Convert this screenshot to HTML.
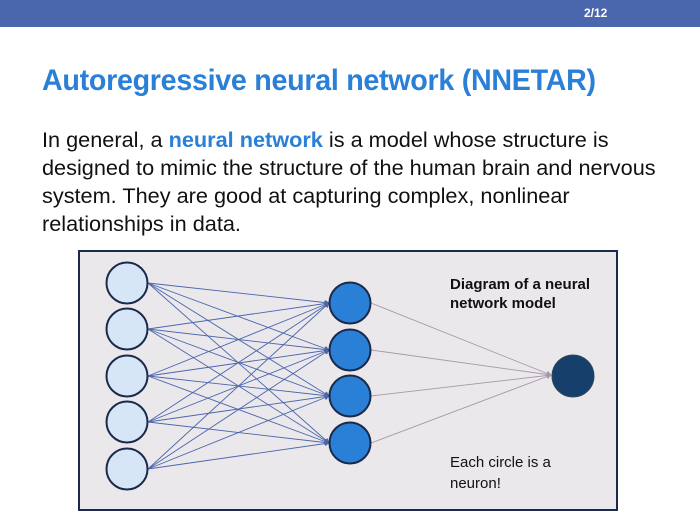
<!DOCTYPE html>
<html><head><style>
body{margin:0;width:700px;height:525px;background:#fff;position:relative;overflow:hidden;font-family:"Liberation Sans",sans-serif}
.bar{position:absolute;left:0;top:0;width:700px;height:27px;background:#4a66ad}
.pg{position:absolute;left:584px;top:6px;color:#fff;font-weight:bold;font-size:12px}
.t{position:absolute;left:42px;top:64px;font-size:30px;font-weight:bold;color:#2a7fd6;white-space:nowrap;transform-origin:0 0;transform:scaleX(0.955);letter-spacing:-0.3px}
.b{position:absolute;left:42px;top:126px;font-size:21.7px;line-height:28px;color:#111;white-space:nowrap}
.b span{color:#2a7fd6;font-weight:bold}
</style></head><body>
<div class="bar"></div><div class="pg">2/12</div>
<div class="t">Autoregressive neural network (NNETAR)</div>
<div class="b">In general, a <span>neural network</span> is a model whose structure is<br>designed to mimic the structure of the human brain and nervous<br>system. They are good at capturing complex, nonlinear<br>relationships in data.</div>
<svg style="position:absolute;left:0;top:0" width="700" height="525">
<defs><marker id="a" markerWidth="6" markerHeight="6" refX="5" refY="3" orient="auto"><path d="M0,0L6,3L0,6z" fill="#4a66ad"/></marker>
<marker id="g" markerWidth="6" markerHeight="6" refX="5" refY="3" orient="auto"><path d="M0,0L6,3L0,6z" fill="#a898a8"/></marker></defs>
<rect x="79" y="251" width="538" height="259" fill="#ebe8eb" stroke="#1b2a4a" stroke-width="2"/>
<g stroke="#4a66ad" stroke-width="0.9" marker-end="url(#a)">
<line x1="148" y1="283" x2="329" y2="303"/><line x1="148" y1="283" x2="329" y2="350"/><line x1="148" y1="283" x2="329" y2="396"/><line x1="148" y1="283" x2="329" y2="443"/>
<line x1="148" y1="329" x2="329" y2="303"/><line x1="148" y1="329" x2="329" y2="350"/><line x1="148" y1="329" x2="329" y2="396"/><line x1="148" y1="329" x2="329" y2="443"/>
<line x1="148" y1="376" x2="329" y2="303"/><line x1="148" y1="376" x2="329" y2="350"/><line x1="148" y1="376" x2="329" y2="396"/><line x1="148" y1="376" x2="329" y2="443"/>
<line x1="148" y1="422" x2="329" y2="303"/><line x1="148" y1="422" x2="329" y2="350"/><line x1="148" y1="422" x2="329" y2="396"/><line x1="148" y1="422" x2="329" y2="443"/>
<line x1="148" y1="469" x2="329" y2="303"/><line x1="148" y1="469" x2="329" y2="350"/><line x1="148" y1="469" x2="329" y2="396"/><line x1="148" y1="469" x2="329" y2="443"/>
</g>
<g stroke="#a898a8" stroke-width="0.9" marker-end="url(#g)">
<line x1="371" y1="303" x2="551" y2="375"/><line x1="371" y1="350" x2="551" y2="375"/><line x1="371" y1="396" x2="551" y2="375"/><line x1="371" y1="443" x2="551" y2="375"/>
</g>
<g fill="#d6e6f7" stroke="#1b2a4a" stroke-width="2">
<circle cx="127" cy="283" r="20.5"/><circle cx="127" cy="329" r="20.5"/><circle cx="127" cy="376" r="20.5"/><circle cx="127" cy="422" r="20.5"/><circle cx="127" cy="469" r="20.5"/>
</g>
<g fill="#2a7fd6" stroke="#1b2a4a" stroke-width="2">
<circle cx="350" cy="303" r="20.5"/><circle cx="350" cy="350" r="20.5"/><circle cx="350" cy="396" r="20.5"/><circle cx="350" cy="443" r="20.5"/>
</g>
<circle cx="573" cy="376" r="21" fill="#163f6b" stroke="#2a4a5a" stroke-width="1"/>
<g font-family="Liberation Sans,sans-serif" font-size="15" fill="#111">
<text x="450" y="289" font-weight="bold">Diagram of a neural</text>
<text x="450" y="308" font-weight="bold">network model</text>
<text x="450" y="467">Each circle is a</text>
<text x="450" y="488">neuron!</text>
</g>
</svg>
</body></html>
